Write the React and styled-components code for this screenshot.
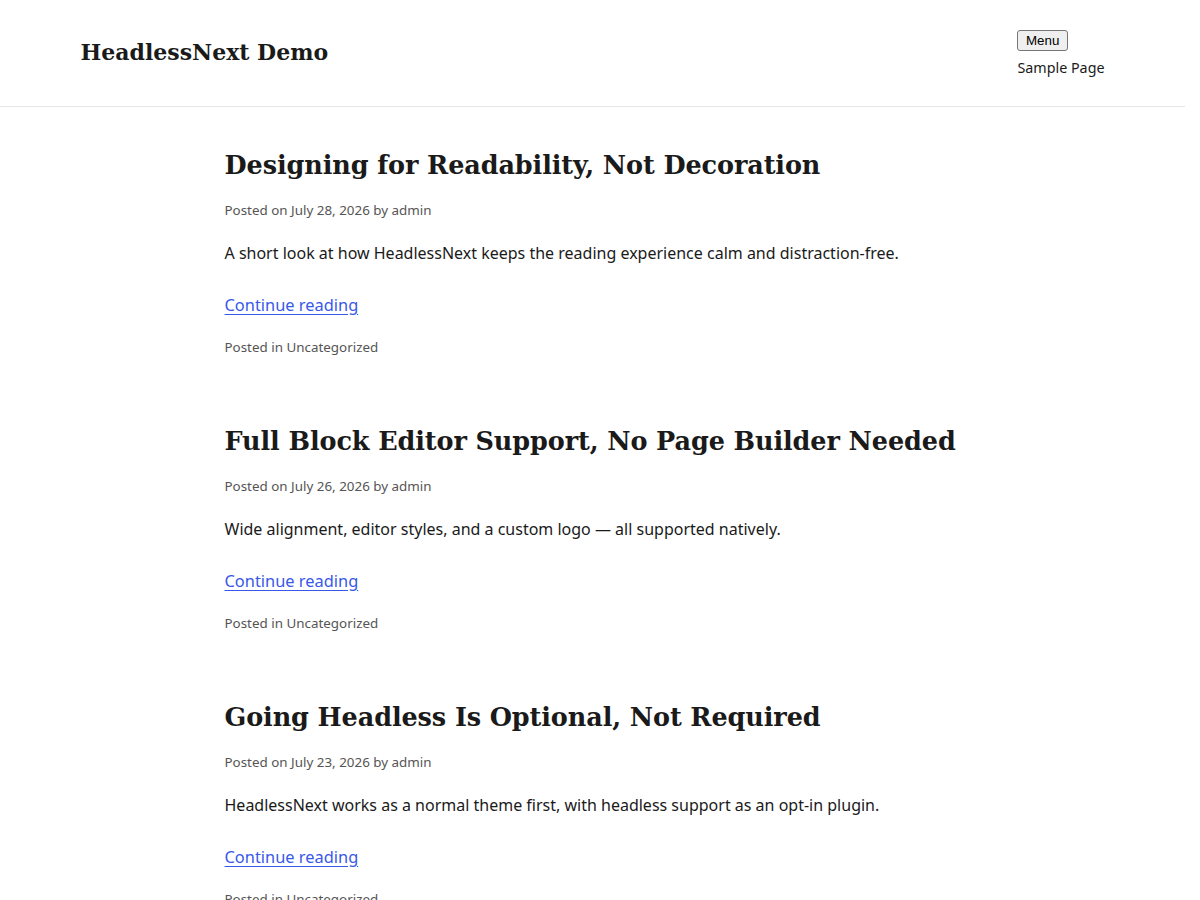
import React from "react";
import styled, { createGlobalStyle } from "styled-components";

// the reference was taken with a classic 15px scrollbar, keep that gutter
const GlobalStyle = createGlobalStyle`
  html, body {
    margin: 0;
    padding: 0;
    background: #fff;
  }
  body {
    padding-right: 15px;
    font-family: "Noto Sans", "Open Sans", sans-serif;
    color: #1a1a1a;
  }
`;

const posts = [
  {
    title: "Designing for Readability, Not Decoration",
    date: "July 28, 2026",
    excerpt:
      "A short look at how HeadlessNext keeps the reading experience calm and distraction-free.",
  },
  {
    title: "Full Block Editor Support, No Page Builder Needed",
    date: "July 26, 2026",
    excerpt:
      "Wide alignment, editor styles, and a custom logo — all supported natively.",
  },
  {
    title: "Going Headless Is Optional, Not Required",
    date: "July 23, 2026",
    excerpt:
      "HeadlessNext works as a normal theme first, with headless support as an opt-in plugin.",
  },
  {
    title: "Hello world!",
    date: "July 20, 2026",
    excerpt:
      "Welcome to WordPress. This is your first post. Edit or delete it, then start writing!",
  },
];

export default function App() {
  return (
    <>
      <GlobalStyle />
      <Header>
        <HeaderInner>
          <SiteTitle href="#">HeadlessNext Demo</SiteTitle>
          <Nav>
            <MenuButton type="button">Menu</MenuButton>
            <NavLink href="#">Sample Page</NavLink>
          </Nav>
        </HeaderInner>
      </Header>
      <Main>
        {posts.map((post) => (
          <Post key={post.title}>
            <PostTitle>
              <a href="#">{post.title}</a>
            </PostTitle>
            <Meta>
              Posted on <a href="#">{post.date}</a> by <a href="#">admin</a>
            </Meta>
            <Excerpt>{post.excerpt}</Excerpt>
            <ReadMore href="#">Continue reading</ReadMore>
            <Meta>
              Posted in <a href="#">Uncategorized</a>
            </Meta>
          </Post>
        ))}
      </Main>
      <Footer>
        <FooterInner>© 2026 HeadlessNext Demo</FooterInner>
      </Footer>
    </>
  );
}

const Header = styled.header`
  border-bottom: 1px solid #e5e5e5;
`;

const HeaderInner = styled.div`
  max-width: 1024px;
  margin: 0 auto;
  padding: 30px 0 28px;
  display: flex;
  justify-content: space-between;
  align-items: flex-start;
`;

const SiteTitle = styled.a`
  font-family: "DejaVu Serif", Georgia, serif;
  font-size: 22px;
  font-weight: 700;
  line-height: 30px;
  padding-top: 7px;
  color: #1a1a1a;
  text-decoration: none;
`;

const Nav = styled.nav`
  display: flex;
  flex-direction: column;
  align-items: flex-start;
  gap: 7px;
`;

const MenuButton = styled.button`
  font-family: "Liberation Sans", Arial, sans-serif;
  font-size: 13.333px;
  height: 21px;
  padding: 1px 7.5px;
  line-height: 16px;
  background: #efefef;
  border: 1px solid #767676;
  border-radius: 3px;
  color: #000;
`;

const NavLink = styled.a`
  font-size: 14.3px;
  line-height: 20px;
  color: #1a1a1a;
  text-decoration: none;
`;

const Main = styled.main`
  max-width: 736px;
  margin: 0 auto;
  padding: 40px 0 40px;
  display: flex;
  flex-direction: column;
  gap: 65px;
`;

const Post = styled.article`
  display: flex;
  flex-direction: column;
  align-items: flex-start;
`;

const PostTitle = styled.h2`
  margin: 0 0 16px;
  font-family: "DejaVu Serif", Georgia, serif;
  font-size: 25.5px;
  font-weight: 700;
  letter-spacing: -0.1px;
  line-height: 36px;

  a {
    color: #1a1a1a;
    text-decoration: none;
  }
`;

const Meta = styled.p`
  margin: 0;
  font-size: 13.4px;
  line-height: 22px;
  color: #555;

  a {
    color: #555;
    text-decoration: none;
  }
`;

const Excerpt = styled.p`
  margin: 18px 0 24px;
  font-size: 16px;
  line-height: 28px;
  color: #1a1a1a;
`;

const ReadMore = styled.a`
  font-size: 16.4px;
  line-height: 28px;
  margin-bottom: 17px;
  color: #3858e9;
  text-decoration: underline;
  text-underline-offset: 3px;
`;

const Footer = styled.footer`
  border-top: 1px solid #e5e5e5;
`;

const FooterInner = styled.div`
  max-width: 1024px;
  margin: 0 auto;
  padding: 32px 0;
  font-size: 14px;
  color: #555;
`;
